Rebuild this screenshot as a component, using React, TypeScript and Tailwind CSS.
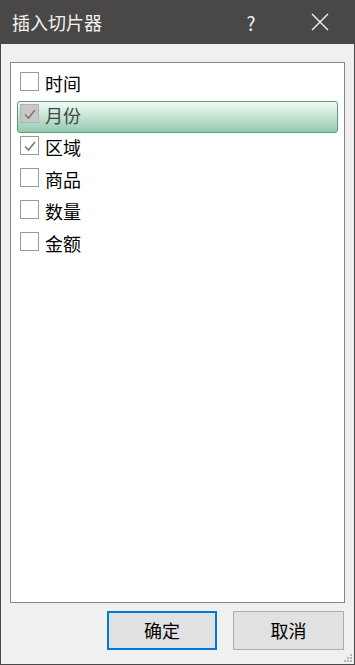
export default function App() {
  const fields = [
    { name: "时间", checked: false, active: false },
    { name: "月份", checked: true, active: true },
    { name: "区域", checked: true, active: false },
    { name: "商品", checked: false, active: false },
    { name: "数量", checked: false, active: false },
    { name: "金额", checked: false, active: false },
  ];

  return (
    <div
      className="w-[355px] h-[665px] flex flex-col bg-[#4a4846] overflow-hidden"
      style={{ fontFamily: '"Microsoft YaHei", "Noto Sans CJK SC", sans-serif' }}
    >
      {/* title bar */}
      <div className="h-[44px] flex items-center text-[#f2f2f2] shrink-0">
        <span className="pl-[12px] text-[18px] leading-none flex-1">插入切片器</span>
        <span className="w-[20px] text-[19px] leading-none mr-[50px] text-center">?</span>
        <svg width="18" height="18" viewBox="0 0 18 18" className="mr-[26px]">
          <path d="M1 1 L17 17 M17 1 L1 17" stroke="#f2f2f2" strokeWidth="1.4" />
        </svg>
      </div>

      {/* body */}
      <div className="flex-1 mx-px mb-px bg-[#f0f0f0] flex flex-col pt-[18px] px-[9px]">
        <div className="h-[541px] bg-white border border-[#828790] pt-[6px] px-[6px]">
          {fields.map((f) => (
            <div
              key={f.name}
              className={
                f.active
                  ? "h-[32px] w-[321px] flex items-start pl-[2px] rounded-[3px] border border-[#5c9a7e] bg-gradient-to-b from-[#f4faf6] to-[#93cbaf]"
                  : "h-[32px] w-[321px] flex items-start pl-[3px]"
              }
            >
              <div
                className={
                  f.active
                    ? "mt-[2px] w-[19px] h-[19px] border border-[#b3b3b3] bg-[#c8c8c8] flex items-center justify-center"
                    : "mt-[3px] w-[19px] h-[19px] border border-[#9a9a9a] bg-white flex items-center justify-center"
                }
              >
                {f.checked && (
                  <svg width="14" height="14" viewBox="0 0 14 14">
                    <path d="M2 7.5 L5.5 11 L12 3" fill="none" stroke="#7a7a7a" strokeWidth="1.6" />
                  </svg>
                )}
              </div>
              <span
                className={
                  f.active
                    ? "ml-[6px] mt-[3px] text-[18px] leading-[21px] text-[#3c4a44]"
                    : "ml-[6px] mt-[4px] text-[18px] leading-[21px] text-black"
                }
              >
                {f.name}
              </span>
            </div>
          ))}
        </div>

        <div className="flex justify-end gap-[16px] mt-[8px] pr-[1px]">
          <button className="w-[110px] h-[39px] bg-[#e1e1e1] border-2 border-[#0078d7] text-[18px] text-black">
            确定
          </button>
          <button className="w-[111px] h-[39px] bg-[#e1e1e1] border border-[#adadad] text-[18px] text-black">
            取消
          </button>
        </div>

        <div className="flex justify-end mt-auto mb-[1px] -mr-[8px]">
          <svg width="9" height="9" viewBox="0 0 9 9">
            <rect x="6" y="0" width="2" height="2" fill="#b8b8b8" />
            <rect x="3" y="3" width="2" height="2" fill="#b8b8b8" />
            <rect x="6" y="3" width="2" height="2" fill="#b8b8b8" />
            <rect x="0" y="6" width="2" height="2" fill="#b8b8b8" />
            <rect x="3" y="6" width="2" height="2" fill="#b8b8b8" />
            <rect x="6" y="6" width="2" height="2" fill="#b8b8b8" />
          </svg>
        </div>
      </div>
    </div>
  );
}
